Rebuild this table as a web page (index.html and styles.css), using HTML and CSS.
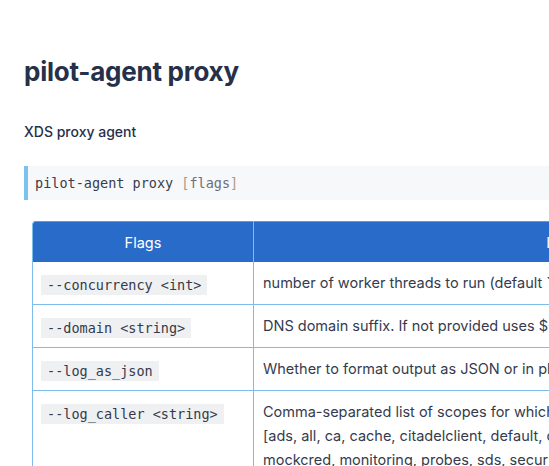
FILE: index.html
```html
<!DOCTYPE html>
<html>
<head>
<meta charset="utf-8">
<link rel="stylesheet" href="styles.css">
</head>
<body>
<main class="page">
  <h1 class="title">pilot-agent proxy</h1>
  <p class="lead">XDS proxy agent</p>
  <pre class="cmd"><code>pilot-agent proxy <span class="punc">[</span><span class="arg">flags</span><span class="punc">]</span></code></pre>
  <table class="flags">
    <thead>
      <tr><th class="col-flag">Flags</th><th class="col-desc">Description</th></tr>
    </thead>
    <tbody>
      <tr><td><code class="pill">--concurrency &lt;int&gt;</code></td><td>number of worker threads to run (default `0`)</td></tr>
      <tr><td><code class="pill">--domain &lt;string&gt;</code></td><td>DNS domain suffix. If not provided uses ${POD_NAMESPACE}.svc.cluster.local (default ``)</td></tr>
      <tr><td><code class="pill">--log_as_json</code></td><td>Whether to format output as JSON or in plain console-friendly format</td></tr>
      <tr><td><code class="pill">--log_caller &lt;string&gt;</code></td><td>Comma-separated list of scopes for which to include caller information, scopes can be any of [ads, all, ca, cache, citadelclient, default, dns, gcecred, googleca, healthcheck, iptables, klog, mockcred, monitoring, probes, sds, security, serviceentry, spiffe, telemetry, validation, wasm, xdsproxy] (default ``)</td></tr>
    </tbody>
  </table>
</main>
</body>
</html>
```
FILE: styles.css
```css
html, body {
  margin: 0;
  padding: 0;
  overflow: hidden;
  background: #ffffff;
}
.page {
  width: 920px;
  padding: 52px 0 0 24px;
  font-family: "Inter", "Noto Sans", sans-serif;
  color: #343b4e;
}
.title {
  margin: 0;
  font-size: 26px;
  line-height: 40px;
  font-weight: 700;
  color: #263049;
  letter-spacing: -0.25px;
}
.lead {
  margin: 29px 0 0 0;
  font-size: 14px;
  line-height: 22px;
  font-weight: 500;
  color: #263049;
}
.cmd {
  margin: 23px 0 0 0;
  padding: 0 0 0 7px;
  height: 34px;
  line-height: 34px;
  background: #f7f8fa;
  border-left: 4px solid #7cc2ef;
  font-family: "DejaVu Sans Mono", monospace;
  font-size: 13.5px;
  color: #383d4c;
}
.punc { color: #b09a82; }
.arg { color: #6b6f7a; }
.flags {
  margin: 21px 0 0 8px;
  border-collapse: separate;
  border-spacing: 0;
  font-size: 14.5px;
}
.flags th {
  background: #296bc8;
  color: #ffffff;
  font-weight: 400;
  height: 40px;
  padding: 0;
  text-align: center;
  border-top: 1px solid #5b9be0;
  border-right: 1px solid #7dbdec;
}
.flags th.col-flag {
  width: 220px;
  border-left: 1px solid #7dbdec;
  border-top-left-radius: 4px;
}
.flags th.col-desc { width: 663px; }
.flags td {
  vertical-align: top;
  padding: 9px;
  line-height: 24px;
  border-right: 1px solid #7dbdec;
  border-bottom: 1px solid #7dbdec;
}
.flags td:first-child {
  border-left: 1px solid #7dbdec;
  padding-left: 8px;
}
.pill {
  display: inline-block;
  vertical-align: top;
  margin-top: 4px;
  padding: 0 6px;
  height: 20px;
  line-height: 20px;
  background: #eff0f2;
  font-family: "DejaVu Sans Mono", monospace;
  font-size: 13.5px;
  color: #343a4a;
}
```
